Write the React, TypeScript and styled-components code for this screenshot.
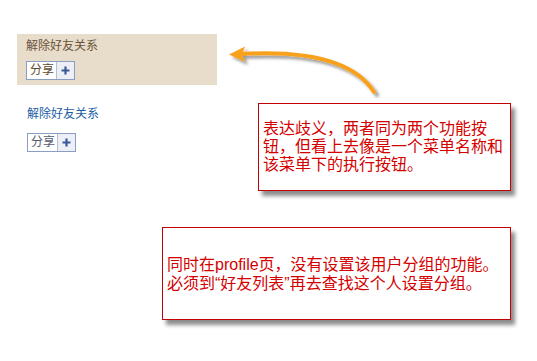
import React from "react";
import styled, { createGlobalStyle } from "styled-components";

const GlobalStyle = createGlobalStyle`
  html, body {
    margin: 0;
    padding: 0;
    background: #ffffff;
  }
  body {
    font-family: "Liberation Sans", "Noto Sans CJK SC", sans-serif;
  }
`;

const Page = styled.div`
  position: relative;
  width: 537px;
  height: 361px;
  box-sizing: border-box;
  padding: 34px 26px 0 17px;
  display: flex;
  flex-direction: column;
`;

const Panel = styled.div`
  width: 200px;
  height: 51px;
  box-sizing: border-box;
  padding: 4px 9px 0;
  background: #e8dccb;
  display: flex;
  flex-direction: column;
  gap: 7px;
`;

const Title = styled.div<{ $link?: boolean }>`
  font-size: 12px;
  line-height: 16px;
  color: ${(p) => (p.$link ? "#1b5ea6" : "#6a553a")};
`;

const Middle = styled.div`
  display: flex;
  margin-top: 18px;
`;

const LinkGroup = styled.div`
  padding: 3px 0 0 10px;
  display: flex;
  flex-direction: column;
  align-items: flex-start;
  gap: 11px;
`;

const ShareButton = styled.div`
  display: inline-flex;
  align-self: flex-start;
  height: 19px;
  box-sizing: border-box;
  border: 1px solid #8b9dc3;
  background: #ffffff;
`;

const ShareLabel = styled.span<{ $tone?: string }>`
  font-size: 12px;
  line-height: 17px;
  padding: 0 2px 0 3px;
  color: ${(p) => p.$tone || "#555"};
`;

const PlusPart = styled.span`
  width: 17px;
  border-left: 1px solid #b4bfd8;
  background: #eceff6;
  display: flex;
  align-items: center;
  justify-content: center;
`;

const Note = styled.div<{ $w: number; $h: number; $lh: number }>`
  width: ${(p) => p.$w}px;
  height: ${(p) => p.$h}px;
  box-sizing: border-box;
  border: 1px solid #c40000;
  background: #ffffff;
  box-shadow: 4px 5px 4px rgba(0, 0, 0, 0.45);
  padding: 0 0 0 4px;
  display: flex;
  align-items: center;
  color: #d40000;
  font-size: 16px;
  line-height: ${(p) => p.$lh}px;
`;

const FirstNote = styled(Note)`
  margin-left: auto;
  margin-right: 0;
`;

const SecondNote = styled(Note)`
  margin-top: 36px;
  margin-left: 145px;
`;

const Arrow = styled.svg`
  position: absolute;
  left: 0;
  top: 0;
  pointer-events: none;
`;

const Plus = () => (
  <svg width="9" height="9" viewBox="0 0 9 9">
    <path d="M4.5 0.5v8M0.5 4.5h8" stroke="#3b5998" strokeWidth="2.2" />
  </svg>
);

const Share = ({ tone }: { tone?: string }) => (
  <ShareButton>
    <ShareLabel $tone={tone}>分享</ShareLabel>
    <PlusPart>
      <Plus />
    </PlusPart>
  </ShareButton>
);

export default function App() {
  return (
    <>
      <GlobalStyle />
      <Page>
        <Panel>
          <Title>解除好友关系</Title>
          <Share tone="#5e4a2e" />
        </Panel>
        <Middle>
          <LinkGroup>
            <Title $link>解除好友关系</Title>
            <Share tone="#555b6e" />
          </LinkGroup>
          <FirstNote $w={253} $h={88} $lh={18}>
            <div>
              表达歧义，两者同为两个功能按
              <br />
              钮，但看上去像是一个菜单名称和
              <br />
              该菜单下的执行按钮。
            </div>
          </FirstNote>
        </Middle>
        <SecondNote $w={349} $h={93} $lh={19}>
          <div>
            同时在profile页，没有设置该用户分组的功能。
            <br />
            必须到“好友列表”再去查找这个人设置分组。
          </div>
        </SecondNote>
        <Arrow width="537" height="361" viewBox="0 0 537 361">
          <defs>
            <filter id="arrowShadow" x="-20%" y="-20%" width="140%" height="160%">
              <feDropShadow dx="3" dy="3" stdDeviation="1.6" floodColor="#000" floodOpacity="0.4" />
            </filter>
          </defs>
          <g filter="url(#arrowShadow)">
            <path
              d="M241 54 C310 50, 355 62, 374 92"
              fill="none"
              stroke="#f8a11c"
              strokeWidth="4"
              strokeLinecap="round"
            />
            <path d="M229 54.5 L245 46.5 L242 54.5 L245 62 Z" fill="#f8a11c" />
          </g>
        </Arrow>
      </Page>
    </>
  );
}
